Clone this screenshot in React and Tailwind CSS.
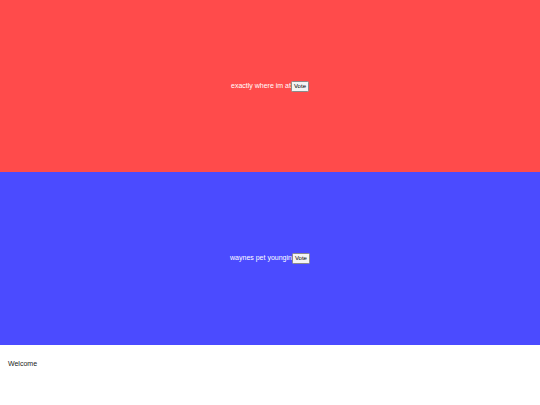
export default function App() {
  const font = { fontFamily: '"Liberation Sans", Arial, sans-serif' };
  return (
    <div className="w-[540px] h-[405px] bg-white" style={font}>
      <div className="h-[172px] bg-[#ff4b4b] flex items-center justify-center text-white text-[7px]">
        <span>exactly where im at</span>
        <button className="bg-[#f4f4f4] text-black border border-[#8a8a8a] rounded-[1.5px] px-[2px] leading-[7px] text-[6px] py-[1px]">Vote</button>
      </div>
      <div className="h-[173px] bg-[#4b4bff] flex items-center justify-center text-white text-[7px]">
        <span>waynes pet youngin</span>
        <button className="bg-[#f4f4f4] text-black border border-[#8a8a8a] rounded-[1.5px] px-[2px] leading-[7px] text-[6px] py-[1px]">Vote</button>
      </div>
      <div className="px-[8px] pt-[14px] text-[7px] text-[#222]">Welcome</div>
    </div>
  );
}
